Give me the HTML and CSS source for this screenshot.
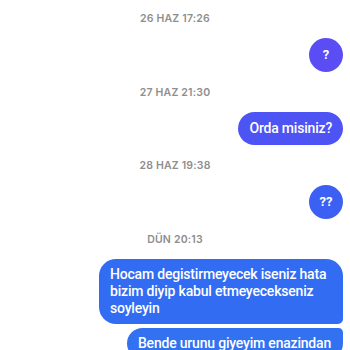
FILE: index.html
```html
<!DOCTYPE html>
<html lang="tr">
<head>
    <meta charset="UTF-8">
    <meta name="viewport" content="width=device-width, initial-scale=1.0">
    <title>Mesajlar</title>
    <link rel="stylesheet" href="styles.css">
</head>
<body>

    <div class="chat">
        <div class="stamp">26 HAZ 17:26</div>
        <div class="msg"><span class="bubble round c1">?</span></div>

        <div class="stamp">27 HAZ 21:30</div>
        <div class="msg"><span class="bubble c2">Orda misiniz?</span></div>

        <div class="stamp">28 HAZ 19:38</div>
        <div class="msg"><span class="bubble round c3">??</span></div>

        <div class="stamp">DÜN 20:13</div>
        <div class="msg"><span class="bubble long first c4">Hocam degistirmeyecek iseniz hata bizim diyip kabul etmeyecekseniz soyleyin</span></div>
        <div class="msg"><span class="bubble long last c5">Bende urunu giyeyim enazindan</span></div>
    </div>

</body>
</html>
```

FILE: styles.css
```css
* {
    box-sizing: border-box;
    margin: 0;
    padding: 0;
}
body {
    background: #ffffff;
    font-family: Roboto, "Liberation Sans", Arial, sans-serif;
    overflow: hidden;
    height: 350px;
}
.chat {
    display: flex;
    flex-direction: column;
    padding: 0 7px 0 0;
}
.stamp {
    margin: 14px 0 12px 7px;
    height: 14px;
    line-height: 14px;
    text-align: center;
    font-family: Inter, Roboto, sans-serif;
    font-size: 10.5px;
    font-weight: 600;
    letter-spacing: 0.2px;
    color: #8e8e8e;
}
.stamp:first-child {
    margin-top: 12px;
}
.msg {
    display: flex;
    justify-content: flex-end;
}
.msg + .msg {
    margin-top: 4px;
}
.bubble {
    display: inline-block;
    color: #fff;
    font-size: 14px;
    font-weight: 500;
    letter-spacing: -0.2px;
    line-height: 19px;
    padding: 7px 11px;
    border-radius: 17px;
}
.round {
    width: 34px;
    height: 34px;
    padding: 0;
    font-size: 13px;
    font-weight: 700;
    letter-spacing: 0;
    line-height: 34px;
    text-align: center;
}
.long {
    max-width: 244px;
    line-height: 17px;
    padding: 7px 12px 7px 11px;
}
.first { border-bottom-right-radius: 5px; }
.last { border-top-right-radius: 5px; }
.c1 { background: #5a4df4; }
.c2 { background: #4e53f4; }
.c3 { background: #3c60f3; }
.c4 { background: #316cf2; }
.c5 { background: #3271f0; }
```
